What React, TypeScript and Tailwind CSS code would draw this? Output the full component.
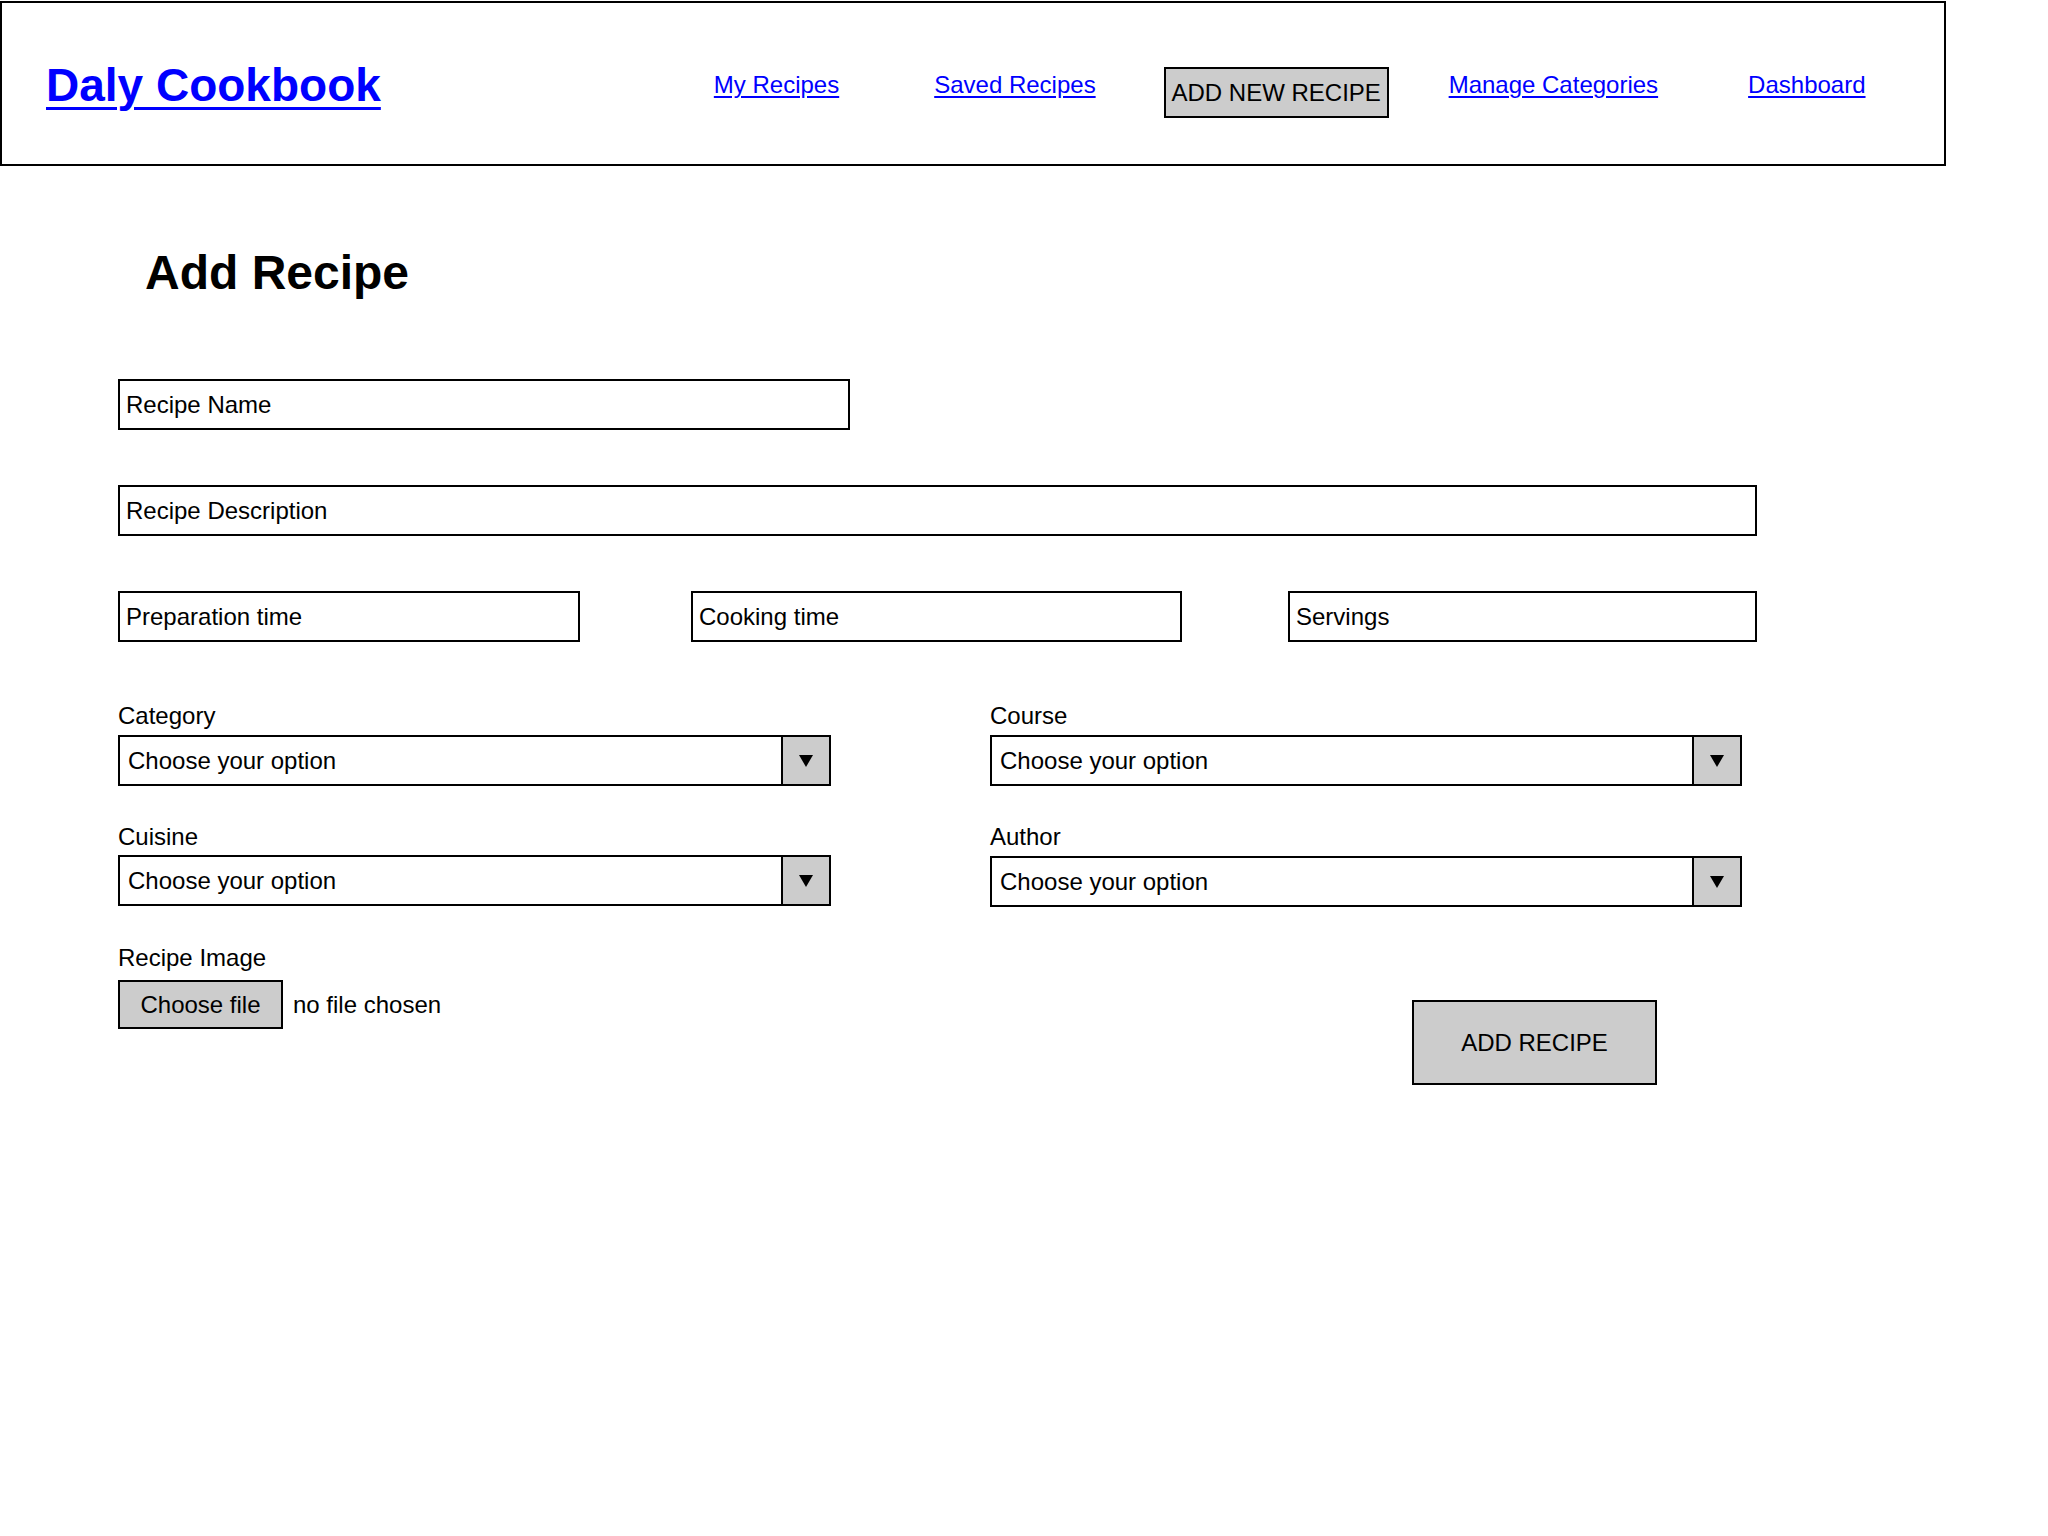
import { ReactNode } from "react";

const navLinks = [
  { label: "My Recipes", ml: "ml-[333px]" },
  { label: "Saved Recipes", ml: "ml-[95px]" },
];

function TextBox({ label, className }: { label: string; className: string }) {
  return (
    <input
      placeholder={label}
      className={`h-[51px] border-2 border-black bg-white px-[6px] text-[24px] text-black outline-none placeholder:text-black ${className}`}
    />
  );
}

function Field({ label, children, gap = "mb-[5px]" }: { label: string; children: ReactNode; gap?: string }) {
  return (
    <div>
      <div className={`text-[24px] leading-[28px] ${gap}`}>{label}</div>
      {children}
    </div>
  );
}

function FakeSelect() {
  return (
    <div className="flex h-[51px] w-full items-stretch border-2 border-black bg-white">
      <span className="flex flex-1 items-center pl-[8px] text-[24px]">Choose your option</span>
      <span className="flex w-[48px] items-center justify-center border-l-2 border-black bg-[#cccccc]">
        <svg width="14" height="12" viewBox="0 0 14 12">
          <polygon points="0,0 14,0 7,12" fill="#000" />
        </svg>
      </span>
    </div>
  );
}

export default function App() {
  return (
    <div className="min-h-screen bg-white pt-px font-['Liberation_Sans','Arial',sans-serif] text-black">
      <header className="flex h-[165px] w-[1946px] items-center border-2 border-black pl-[44px]">
        <a href="#" className="mt-[2px] text-[46px] leading-none font-bold text-[#0000ff] underline decoration-[3px] underline-offset-[6px]">
          Daly Cookbook
        </a>
        {navLinks.map((l) => (
          <a key={l.label} href="#" className={`${l.ml} mt-[3px] text-[24px] leading-none text-[#0000ff] underline underline-offset-[3px]`}>
            {l.label}
          </a>
        ))}
        <button className="mt-[18px] ml-[68px] flex h-[51px] w-[225px] items-center justify-center border-2 border-black bg-[#cccccc] text-[24px]">
          ADD NEW RECIPE
        </button>
        <a href="#" className="mt-[3px] ml-[60px] text-[24px] leading-none text-[#0000ff] underline underline-offset-[3px]">
          Manage Categories
        </a>
        <a href="#" className="mt-[3px] ml-[90px] text-[24px] leading-none text-[#0000ff] underline underline-offset-[3px]">
          Dashboard
        </a>
      </header>

      <main className="pl-[118px]">
        <h1 className="mt-[83px] ml-[27px] text-[48px] leading-none font-bold">Add Recipe</h1>

        <div className="mt-[82px] flex">
          <TextBox label="Recipe Name" className="w-[732px]" />
        </div>
        <div className="mt-[55px] flex">
          <TextBox label="Recipe Description" className="w-[1639px]" />
        </div>
        <div className="mt-[55px] flex">
          <TextBox label="Preparation time" className="w-[462px]" />
          <TextBox label="Cooking time" className="ml-[111px] w-[491px]" />
          <TextBox label="Servings" className="ml-[106px] w-[469px]" />
        </div>

        <div className="mt-[60px] grid grid-cols-[713px_752px] gap-x-[159px] gap-y-[37px]">
          <Field label="Category">
            <FakeSelect />
          </Field>
          <Field label="Course">
            <FakeSelect />
          </Field>
          <Field label="Cuisine" gap="mb-[4px]">
            <FakeSelect />
          </Field>
          <Field label="Author" gap="mb-[5px]">
            <FakeSelect />
          </Field>
          <Field label="Recipe Image" gap="mb-[8px]">
            <div className="flex items-center gap-[10px]">
              <button className="flex h-[49px] w-[165px] items-center justify-center border-2 border-black bg-[#cccccc] text-[24px]">
                Choose file
              </button>
              <span className="text-[24px]">no file chosen</span>
            </div>
          </Field>
          <div>
            <button className="mt-[56px] ml-[422px] flex h-[85px] w-[245px] items-center justify-center border-2 border-black bg-[#cccccc] text-[24px]">
              ADD RECIPE
            </button>
          </div>
        </div>
      </main>
    </div>
  );
}
